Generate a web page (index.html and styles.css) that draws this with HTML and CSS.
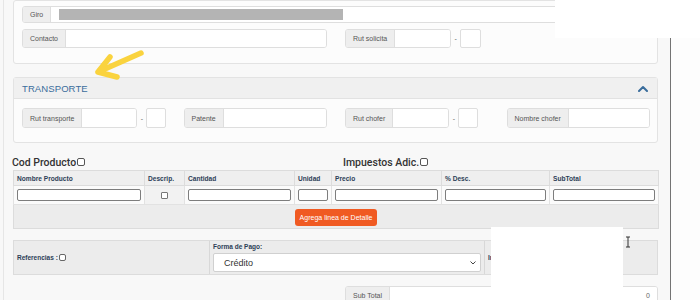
FILE: index.html
```html
<!DOCTYPE html>
<html lang="es">
<head>
<meta charset="utf-8">
<title>Factura</title>
<link rel="stylesheet" href="styles.css">
</head>
<body>
<div class="app">
  <div class="main">
    <div class="content">
      <section class="panel panel-top">
        <div class="grid">
          <div class="ig span4 h17"><span class="lbl">Giro</span><span class="inp"><span class="redact"></span></span></div>
          <div class="ig span2 h19"><span class="lbl">Contacto</span><span class="inp"></span></div>
          <div class="rut h19">
            <div class="ig"><span class="lbl">Rut solicita</span><span class="inp w55"></span></div>
            <span class="dash">-</span>
            <span class="box w21"></span>
          </div>
        </div>
      </section>

      <section class="panel panel-transport">
        <div class="panel-head">
          <span class="panel-title">TRANSPORTE</span>
          <svg class="chev" width="10" height="7" viewBox="0 0 10 7"><path d="M1 6 L5 2 L9 6" fill="none" stroke="#3a6d9c" stroke-width="2" stroke-linecap="round" stroke-linejoin="round"/></svg>
        </div>
        <div class="panel-body grid">
          <div class="rut h20">
            <div class="ig"><span class="lbl">Rut transporte</span><span class="inp w54"></span></div>
            <span class="dash">-</span>
            <span class="box w20"></span>
          </div>
          <div class="ig h20"><span class="lbl">Patente</span><span class="inp"></span></div>
          <div class="rut h20">
            <div class="ig"><span class="lbl">Rut chofer</span><span class="inp w55"></span></div>
            <span class="dash">-</span>
            <span class="box w20"></span>
          </div>
          <div class="ig h20"><span class="lbl">Nombre chofer</span><span class="inp"></span></div>
        </div>
      </section>

      <div class="items-head">
        <span class="sect">Cod Producto<span class="chk"></span></span>
        <span class="sect">Impuestos Adic.<span class="chk"></span></span>
      </div>

      <table class="items">
        <colgroup>
          <col class="c1"><col class="c2"><col class="c3"><col class="c4"><col class="c5"><col class="c6"><col class="c7">
        </colgroup>
        <thead>
          <tr><th>Nombre Producto</th><th>Descrip.</th><th>Cantidad</th><th>Unidad</th><th>Precio</th><th>% Desc.</th><th>SubTotal</th></tr>
        </thead>
        <tbody>
          <tr class="row-in">
            <td><span class="tin"></span></td>
            <td class="center gray"><span class="tchk"></span></td>
            <td><span class="tin"></span></td>
            <td><span class="tin"></span></td>
            <td><span class="tin"></span></td>
            <td><span class="tin"></span></td>
            <td><span class="tin"></span></td>
          </tr>
          <tr class="row-btn">
            <td colspan="7"><button class="btn">Agrega linea de Detalle</button></td>
          </tr>
        </tbody>
      </table>

      <div class="refs">
        <div class="refs-cell refs-first"><span class="small-b">Referencias :</span><span class="chk sm"></span></div>
        <div class="refs-cell refs-pay">
          <span class="small-b">Forma de Pago:</span>
          <div class="select"><span>Crédito</span>
            <svg width="6" height="4" viewBox="0 0 6 4"><path d="M0.5 0.5 L3 3 L5.5 0.5" fill="none" stroke="#444" stroke-width="1"/></svg>
          </div>
        </div>
        <div class="refs-cell refs-last"><span class="small-b">Indicador</span></div>
      </div>

      <div class="ig subtotal h18"><span class="lbl">Sub Total</span><span class="inp num">0</span></div>
    </div>
  </div>
  <div class="side"></div>

  <div class="mask mask-top"></div>
  <div class="mask mask-bottom"></div>
  <svg class="arrow" width="60" height="40" viewBox="0 0 60 40">
    <path d="M53 5 L10 24 M10 24 L22 9 M10 24 L29 29" fill="none" stroke="#fad33e" stroke-width="5.5" stroke-linecap="round" stroke-linejoin="round"/>
  </svg>
  <svg class="cursor" width="6" height="12" viewBox="0 0 6 12">
    <path d="M1 1 H5 M3 1 V11 M1 11 H5" fill="none" stroke="#333" stroke-width="1"/>
  </svg>
</div>
</body>
</html>
```

FILE: styles.css
```css
* { box-sizing: border-box; }
html, body { margin: 0; padding: 0; }
body {
  font-family: "Liberation Sans", Arial, sans-serif;
  background: #fff;
  color: #333;
}
.app {
  position: relative;
  display: flex;
  width: 700px;
  height: 300px;
  overflow: hidden;
}
.main {
  flex: none;
  width: 671px;
  height: 300px;
  padding-left: 3px;
  background: #f8f8f8;
  border-right: 1px solid #747474;
}
.content {
  height: 100%;
  border-left: 1px solid #e6e6e6;
  padding: 0 12px 0 9px;
}
.side { flex: 1; background: #fdfdfd; }

/* panels */
.panel {
  background: #fcfcfc;
  border: 1px solid #e3e3e3;
  border-radius: 3px;
}
.panel-top { padding: 5px 9px 15px 8px; }
.grid {
  display: grid;
  grid-template-columns: repeat(4, 143px);
  column-gap: 18.5px;
  row-gap: 6px;
}
.span4 { grid-column: span 4; }
.span2 { grid-column: span 2; }
.h17 { height: 17px; }
.h18 { height: 18px; }
.h19 { height: 19px; }
.h20 { height: 20px; }

.ig {
  display: flex;
  border: 1px solid #dedede;
  border-radius: 3px;
  overflow: hidden;
  background: #fff;
}
.rut { display: flex; align-items: stretch; }
.rut .ig { flex: none; }
.lbl {
  display: flex;
  align-items: center;
  flex: none;
  padding: 0 7px;
  background: #eeeeee;
  border-right: 1px solid #dedede;
  font-size: 7px;
  color: #555;
}
.inp { flex: 1; display: block; background: #fff; position: relative; }
.w54 { flex: none; width: 54px; }
.w55 { flex: none; width: 55px; }
.redact {
  position: absolute;
  left: 8px;
  top: 2px;
  width: 284px;
  height: 11px;
  background: #b4b4b4;
}
.dash {
  width: 9px;
  flex: none;
  display: flex;
  align-items: center;
  justify-content: center;
  font-size: 7px;
  color: #666;
}
.box {
  flex: none;
  background: #fff;
  border: 1px solid #dedede;
  border-radius: 2px;
}
.w20 { width: 20px; }
.w21 { width: 21px; }

.panel-transport { margin-top: 13px; }
.panel-head {
  height: 21px;
  display: flex;
  align-items: center;
  justify-content: space-between;
  padding: 0 9px 0 8px;
  background: #f0f0f0;
  border-bottom: 1px solid #e2e2e2;
}
.panel-title {
  font-size: 9.5px;
  color: #3a6d9c;
  letter-spacing: 0.1px;
}
.panel-body { padding: 9px 9px 14px 8px; }

/* items */
.items-head {
  display: grid;
  grid-template-columns: 331px 1fr;
  height: 16px;
  margin-top: 11px;
  margin-left: -1px;
  align-items: center;
}
.sect {
  display: flex;
  align-items: center;
  font-family: Roboto, "Liberation Sans", sans-serif;
  font-size: 10.5px;
  font-weight: 500;
  color: #333;
}
.chk {
  display: inline-block;
  width: 8px;
  height: 8px;
  margin-left: 1px;
  border: 1px solid #555;
  border-radius: 2px;
  background: #fff;
}
.chk.sm { width: 7px; height: 7px; border-color: #666; }

.items {
  width: 645px;
  border-collapse: collapse;
  table-layout: fixed;
}
.c1 { width: 131px; }
.c2 { width: 40px; }
.c3 { width: 110px; }
.c4 { width: 37px; }
.c5 { width: 110px; }
.c6 { width: 108px; }
.c7 { width: 109px; }
.items th {
  height: 15px;
  padding: 0 3px;
  background: #efefef;
  border: 1px solid #dcdcdc;
  font-size: 6.6px;
  font-weight: bold;
  text-align: left;
  color: #2d3e57;
}
.row-in td {
  height: 19px;
  padding: 0 3px;
  background: #fbfbfb;
  border: 1px solid #e2e2e2;
  vertical-align: middle;
}
.row-in td.gray { background: #f2f2f2; }
.center { text-align: center; }
.tin {
  display: block;
  height: 12px;
  background: #fff;
  border: 1px solid #7d7d7d;
  border-radius: 2px;
}
.tchk {
  display: inline-block;
  width: 7px;
  height: 7px;
  vertical-align: middle;
  border: 1px solid #777;
  border-radius: 1px;
  background: #fff;
}
.row-btn td {
  height: 24px;
  background: #ececec;
  border: 1px solid #dcdcdc;
  text-align: center;
  vertical-align: middle;
  padding: 0;
}
.btn {
  height: 17px;
  padding: 0 5px;
  border: 0;
  border-radius: 3px;
  background: #f05a22;
  color: #fff;
  font-family: "Liberation Sans", Arial, sans-serif;
  font-size: 7px;
  vertical-align: middle;
}

/* references */
.refs {
  display: grid;
  grid-template-columns: 195px 275px 1fr;
  height: 35px;
  margin-top: 11px;
  background: #ececec;
  border: 1px solid #dcdcdc;
}
.refs-cell + .refs-cell { border-left: 1px solid #d8d8d8; }
.refs-first { display: flex; align-items: center; padding-left: 3px; }
.refs-pay { padding: 2px 3px 0 3px; display: flex; flex-direction: column; }
.refs-last { display: flex; align-items: center; padding-left: 3px; overflow: hidden; }
.small-b {
  font-size: 6.5px;
  font-weight: bold;
  color: #2d3e57;
}
.select {
  margin-top: 3px;
  height: 19px;
  display: flex;
  align-items: center;
  justify-content: space-between;
  padding: 0 4px 0 10px;
  background: #fff;
  border: 1px solid #d0d0d0;
  border-radius: 2px;
  font-size: 9px;
  color: #333;
}

.subtotal {
  margin: 11px 0 0 332px;
  width: 313px;
}
.num {
  display: flex;
  align-items: center;
  justify-content: flex-end;
  padding-right: 7px;
  font-size: 7px;
  color: #666;
}

/* overlays */
.mask { position: absolute; background: #fff; }
.mask-top { left: 555px; top: 0; width: 145px; height: 38px; }
.mask-bottom { left: 491px; top: 227px; width: 132px; height: 73px; }
.arrow { position: absolute; left: 88px; top: 48px; }
.cursor { position: absolute; left: 625px; top: 236px; }
```
